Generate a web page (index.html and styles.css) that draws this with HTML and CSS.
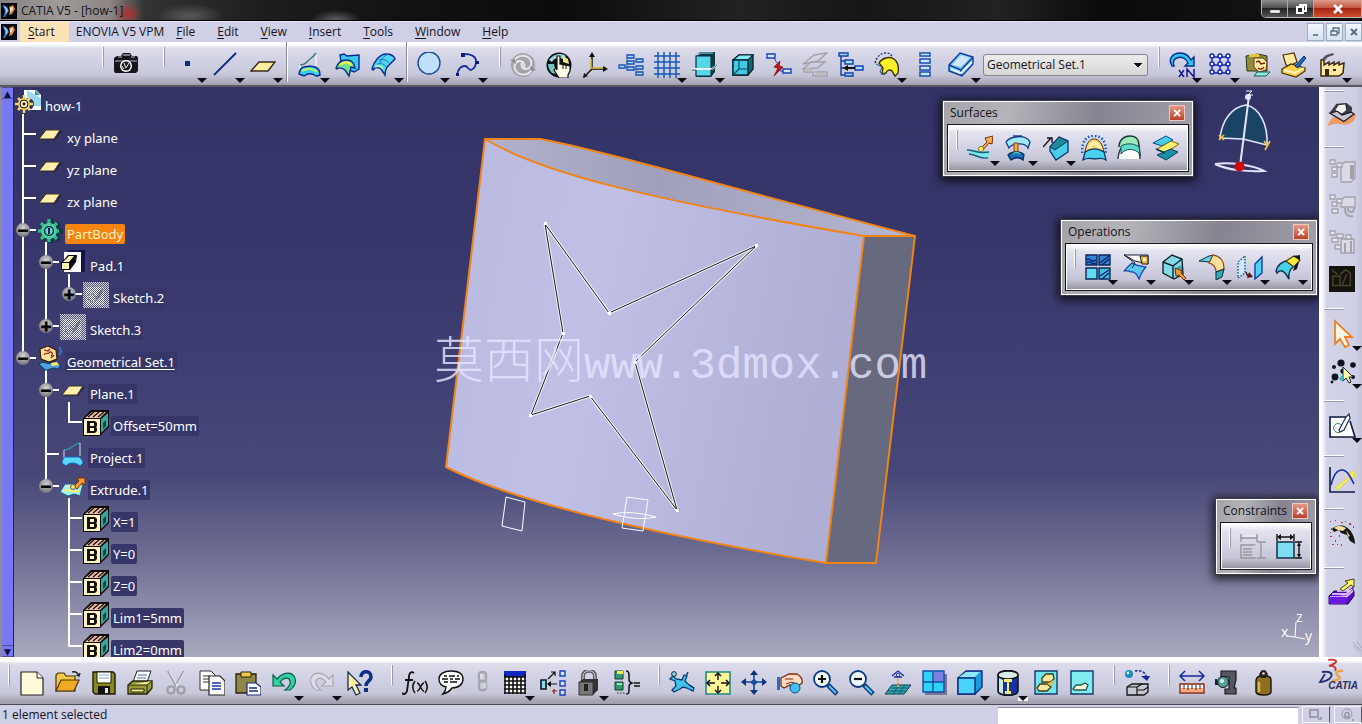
FILE: index.html
```html
<!DOCTYPE html>
<html lang="en">
<head>
<meta charset="utf-8">
<title>CATIA V5 - [how-1]</title>
<link rel="stylesheet" href="styles.css">
</head>
<body>
<svg class="defs" aria-hidden="true">
  <symbol id="app" viewBox="0 0 16 16"><path fill="#05070c" d="M0 0h16v16H0z"/><path fill="#2c6fb5" d="M2 2l4 2 2 4-4 6H2l2-5z"/><path fill="#9fd0f0" d="M2 2l4 3 1 3-3 3 1-4z"/><path fill="#e08a3c" d="M8 4l4-2 2 4-3 5-3 1 1-4z"/><path fill="#fbe3bd" d="M9 5l3-1-1 4-2 1z"/></symbol>
  <symbol id="plane" viewBox="0 0 26 26"><path d="M3 18L9 9h16l-7 9z" fill="#101040" opacity=".55"/><path d="M2 17L9 8h14l-6 9z" fill="#ffeeaa" stroke="#3a3520"/></symbol>
  <symbol id="param" viewBox="0 0 26 26"><path d="M0 8L8 0h18v17l-9 9H0z" fill="#0b0b0b"/><path d="M2 8l7-6h14l-6 6z" fill="#f5b9a8"/><path d="M5 7l6-5m-1 5l6-5m-1 5l6-5" stroke="#151515" stroke-width="1.4"/><path d="M1 9h16v16H1z" fill="#fff3bd"/><path d="M18 9l7-6v13l-7 7z" fill="#37a79d"/><path d="M20 13l3-3v6l-3 3z" fill="#0c4441"/><path d="M4 11h8l2 2v3l-1 1 1 1v3l-2 2H4zm3 2v3h4v-3zm0 5v3h4v-3z" fill="#111" fill-rule="evenodd"/></symbol>
  <pattern id="dither" width="2" height="2" patternUnits="userSpaceOnUse"><path d="M0 0h2v2H0z" fill="#5a5a78"/><path d="M0 0h1v1H0zM1 1h1v1H1z" fill="#fff"/></pattern>
  <symbol id="sketch" viewBox="0 0 26 26"><path d="M0 0h26v26H0z" fill="url(#dither)" opacity=".75"/><path d="M3 5h18v18H3z" fill="url(#dither)"/><path d="M12 18l4-8 3-4 2 1-4 8-4 4z" fill="#4a5a68" opacity=".6"/><circle cx="9" cy="16" r="4" fill="none" stroke="#8a8aa0"/></symbol>
</svg>

<header class="titlebar">
  <svg class="app-icon"><use href="#app"/></svg>
  <h1 class="title">CATIA V5 - [how-1]</h1>
  <div class="win-buttons">
    <button class="win" aria-label="Minimize"><svg viewBox="0 0 14 12"><path d="M2 7h10v3H2z" fill="#fff" stroke="#444" stroke-width=".5"/></svg></button>
    <button class="win" aria-label="Restore"><svg viewBox="0 0 14 12"><path d="M5 2h7v6h-2M3 4h6v6H3z" fill="none" stroke="#fff" stroke-width="2"/></svg></button>
    <button class="win win-close" aria-label="Close"><svg viewBox="0 0 14 12"><path d="M3 2l8 8M11 2l-8 8" stroke="#fff" stroke-width="2.6"/></svg></button>
  </div>
</header>

<nav class="menubar">
  <svg class="app-icon"><use href="#app"/></svg>
  <button class="menu menu-hot"><u>S</u>tart</button>
  <button class="menu menu-vpm">ENOVIA V5 VPM</button>
  <button class="menu"><u>F</u>ile</button>
  <button class="menu"><u>E</u>dit</button>
  <button class="menu"><u>V</u>iew</button>
  <button class="menu"><u>I</u>nsert</button>
  <button class="menu"><u>T</u>ools</button>
  <button class="menu"><u>W</u>indow</button>
  <button class="menu"><u>H</u>elp</button>
  <div class="doc-buttons">
    <button class="doc" aria-label="Minimize document"><svg viewBox="0 0 12 12"><path d="M3 9h5" stroke="#5b6b80" stroke-width="1.6"/></svg></button>
    <button class="doc" aria-label="Restore document"><svg viewBox="0 0 12 12"><path d="M4 5V2h6v5H8M2 5h6v4H2z" fill="none" stroke="#5b6b80" stroke-width="1.3"/></svg></button>
    <button class="doc" aria-label="Close document"><svg viewBox="0 0 12 12"><path d="M3 3l6 6M9 3l-6 6" stroke="#5b6b80" stroke-width="2"/></svg></button>
  </div>
</nav>

<div class="toolbar toolbar-top">
  <div class="group group-first"><i class="grip"></i>
    <button class="tool" aria-label="Capture"><svg viewBox="0 0 26 26"><path d="M1 6l3-2h4l2-3h7l2 3h5l1 2v13l-2 2H2l-1-2z" fill="#16161c"/><path d="M2 9h22M5 5h4m9 0h4" stroke="#b9b9c8"/><path d="M10 3h7" stroke="#ddd"/><circle cx="13" cy="14" r="6" fill="#fff"/><circle cx="13" cy="14" r="4.6" fill="#1b1b20"/><path d="M11 11l2 5 3-5M9 14l2 3" stroke="#eee" fill="none"/></svg></button>
  </div>
  <div class="group"><i class="grip"></i>
    <button class="tool drop" aria-label="Point"><svg viewBox="0 0 26 26"><path d="M11 9h5v5h-5z" fill="#0b2f7a"/></svg></button>
    <button class="tool drop" aria-label="Line"><svg viewBox="0 0 26 26"><path d="M2 23L24 1" stroke="#0d2b78" stroke-width="1.8"/></svg></button>
    <button class="tool drop" aria-label="Plane"><svg viewBox="0 0 26 26"><path d="M1 19L9 10h16l-7 9z" fill="#ffeea0" stroke="#3a2a1a" stroke-width="1.4"/></svg></button>
  </div>
  <i class="rule"></i>
  <div class="group">
    <button class="tool drop" aria-label="Projection"><svg viewBox="0 0 26 26"><path d="M3 13c6 0 7-4 10-6s4-3 6-6" fill="none" stroke="#3c7a80" stroke-width="1.5"/><path d="M3 13v4M19 3v11" stroke="#fff"/><path d="M2 22c1-5 3-7 5-7 4-1 8-1 11 0 3 1 5 4 5 8-2 1-4 1-4 1-4-3-8-3-12 0z" fill="#35d0f0" stroke="#0a2a90" stroke-width="1.4"/><path d="M5 19c5-3 11-3 15 1" stroke="#c6f560" stroke-width="2" fill="none"/></svg></button>
    <button class="tool" aria-label="Intersection"><svg viewBox="0 0 26 26"><path d="M5 3l4-1 3 2 12-1v14l-5 3-12-5z" fill="#3fc9ef" stroke="#0a2a90" stroke-width="1.4"/><path d="M1 16c2-6 6-8 11-8 4 0 7 3 8 8l-4-1-2 9-4-6c-3-2-6-3-8-1z" fill="#6be38c" stroke="#0a2a90" stroke-width="1.4"/><path d="M5 13c4-4 9-3 12 0" stroke="#f6ee50" stroke-width="2.4" fill="none"/></svg></button>
    <button class="tool drop" aria-label="Parallel curve"><svg viewBox="0 0 26 26"><path d="M1 17c2-8 8-15 14-15 5 0 8 2 9 5l-6 6c-3 3-4 6-4 10l-4-6c-3-2-6-2-8 1z" fill="#52d4f2" stroke="#0a2a90" stroke-width="1.4"/><path d="M6 12c4-1 8 0 9 3M8 8c5-1 8 0 10 3M17 2c-4 2-7 5-8 9" stroke="#1577b8" fill="none"/><path d="M4 15c3-2 7-1 8 2" stroke="#a6f0b0" stroke-width="2" fill="none"/></svg></button>
  </div>
  <i class="rule rule-tight"></i>
  <div class="group">
    <button class="tool drop" aria-label="Circle"><svg viewBox="0 0 26 26"><circle cx="12" cy="11" r="11" fill="#bfe0f8" stroke="#1c4a9a" stroke-width="1.4"/></svg></button>
    <button class="tool drop" aria-label="Spline"><svg viewBox="0 0 26 26"><path d="M2 23c1-6 4-9 8-9 3 0 3 4 6 4 3-1 6-5 5-10-1-4-5-6-12-6" fill="none" stroke="#1a2ea0" stroke-width="1.8"/><path d="M6 1h4v4H6zM20 9h4v3h-4zM1 21h3v3H1z" fill="#0a1c80"/></svg></button>
  </div>
  <div class="group group-wide"><i class="grip"></i>
    <button class="tool" aria-label="Update all"><svg viewBox="0 0 26 26"><circle cx="13" cy="13" r="12" fill="#a4a4a8"/><path d="M4 9c3-6 12-7 16-2 3 5 0 10-4 10-5 0-6-6-2-7M22 17c-3 7-12 7-16 2-3-4-1-9 3-10 5 0 7 5 4 8" fill="none" stroke="#e4e4ea" stroke-width="2"/><path d="M0 8l5-1 1 5zM26 18l-5 1-1-5z" fill="#8d8d92"/></svg></button>
    <button class="tool" aria-label="Manual update"><svg viewBox="0 0 26 26"><circle cx="13" cy="13" r="12.5" fill="#0a0f12"/><path d="M3 8c4-6 12-8 17-4l-3 3C12 5 8 6 6 10z" fill="#9adad8"/><path d="M2 12h6l2 10-4-1c-2-2-4-5-4-9z" fill="#75c7c4"/><path d="M17 4l5 3 1 5-6-2z" fill="#f5e789"/><path d="M11 4h3v8l10 2v5l-2 4v3h-9l-5-8 2-2 1 2z" fill="#fffbe8" stroke="#111" stroke-width="1.2"/><path d="M17 13v4m3-4v4" stroke="#111"/></svg></button>
    <button class="tool" aria-label="Axis system"><svg viewBox="0 0 26 26"><path d="M10 3v14h14M10 17l-8 8" fill="none" stroke="#1a1408" stroke-width="1.5"/><path d="M9 7v9h12" fill="none" stroke="#d9b53c" stroke-width="1.4"/><path d="M10 0l3 5H7zM26 17l-5-3v6zM1 26l1-5 4 3z" fill="#111"/></svg></button>
    <button class="tool" aria-label="Historical graph"><svg viewBox="0 0 26 26"><path d="M4 15h7M9 10h8m-2 8h5M9 6v9" stroke="#777"/><g fill="#a9dcf5" stroke="#1b4fb0" stroke-width="1.3"><path d="M9 3h7v3H9zM1 13h6v3H1zM9 9h7v3H9zM18 7h7v3h-7zM9 15h7v3H9zM18 14h7v3h-7zM18 20h7v3h-7z"/></g></svg></button>
    <button class="tool drop" aria-label="Grid"><svg viewBox="0 0 26 26"><path d="M4 0v26M10 0v26M16 0v26M22 0v26M0 4h26M0 10h26M0 16h26M0 22h26" stroke="#1558b8" stroke-width="1.5"/></svg></button>
    <button class="tool drop" aria-label="Work on support"><svg viewBox="0 0 26 26"><path d="M4 4l4-4h15v20l-4 5H4z" fill="#0c3d42"/><path d="M4 4h15v20H4z" fill="#55d8ea" stroke="#0b2d40" stroke-width="1.2"/><path d="M0 17h20l5-4" stroke="#eef" stroke-width="2" fill="none"/><path d="M0 18h4m15 0l6-5" stroke="#28586a" fill="none"/><path d="M5 3l4-2h12" stroke="#9df" fill="none"/></svg></button>
    <button class="tool" aria-label="Create datum"><svg viewBox="0 0 26 26"><path d="M3 8l6-5h14v14l-5 6H3z" fill="#0d6a78" stroke="#07272e" stroke-width="1.4"/><path d="M3 8l6-5h14l-5 5z" fill="#8ae6f2" stroke="#07272e" stroke-width="1.2"/><path d="M3 8h15v15H3z" fill="#41cbe0" stroke="#07272e" stroke-width="1.4"/><path d="M4 22l5-5V9m0 8h9" fill="none" stroke="#0b4d77" stroke-width="1.2"/></svg></button>
    <button class="tool" aria-label="Insert mode"><svg viewBox="0 0 26 26"><g fill="#d2e4fb" stroke="#1b3fb0" stroke-width="1.4"><path d="M1 2h8v4H1zM17 17h8v4h-8z"/></g><path d="M8 6l3 5M14 19h3" stroke="#1b3fb0"/><path d="M14 9l-6 6 4 1-4 8 9-9-4-1z" fill="#c01818" stroke="#7a0b0b" stroke-width=".8"/></svg></button>
    <button class="tool" aria-label="Keep mode"><svg viewBox="0 0 26 26"><g fill="none" stroke="#a3a3a8" stroke-width="1.5"><path d="M1 12L12 3l13-2-9 8zM1 17l8-7h14l-8 6zM2 16v4h9v4h14v-4H13"/></g><path d="M3 18h8M14 22h9" stroke="#bcbcc2" stroke-width="3"/></svg></button>
    <button class="tool" aria-label="Select body"><svg viewBox="0 0 26 26"><path d="M3 1v22h5M3 9h5m-5 7h5" stroke="#123a9a" stroke-width="1.4" fill="none"/><g fill="#a5dcf7" stroke="#143fae" stroke-width="1.4"><path d="M1 1h9v3H1zM7 8h8v4H7zM17 14h8v4h-8zM7 21h8v3H7z"/></g><path d="M5 16l5-3v2h7v2h-7v2z" fill="#111"/></svg></button>
    <button class="tool drop" aria-label="Only current body"><svg viewBox="0 0 26 26"><path d="M1 11C3 4 7 1 12 1s6 3 6 5" fill="none" stroke="#16347e" stroke-dasharray="2 1.5" stroke-width="1.4"/><path d="M5 11C8 6 15 4 20 7c4 3 5 8 4 14l-3 3-3-5c-2-2-5-1-6 2l-4 1 1-6z" fill="#fff02a" stroke="#3a3208" stroke-width="1.4"/><path d="M2 12l6 3-2 5 5 3" stroke="#1d5c90" fill="none"/></svg></button>
    <button class="tool" aria-label="Isolate"><svg viewBox="0 0 26 26"><g fill="#c9e8fa" stroke="#1a4fb5" stroke-width="1.5"><path d="M8 1h10v3H8zM8 7h10v4H8zM8 14h10v4H8zM8 20h10v4H8z"/></g></svg></button>
    <button class="tool drop" aria-label="Catalog"><svg viewBox="0 0 26 26"><path d="M1 13L12 1l13 4v7L14 24 1 19z" fill="#6fcaf0" stroke="#123a9a" stroke-width="1.4"/><path d="M1 13l12 5L25 5M13 18v6" fill="none" stroke="#123a9a" stroke-width="1.4"/><path d="M4 13L13 3l9 3-9 9z" fill="#cfe6fb"/><path d="M3 17l10 4 11-11" stroke="#fff" fill="none" stroke-width="1.6"/></svg></button>
  </div>
  <select class="set-select" aria-label="In work object"><option>Geometrical Set.1</option></select>
  <div class="group group-near"><i class="grip"></i>
    <button class="tool drop" aria-label="Object repetition"><svg viewBox="0 0 26 26"><path d="M3 14C-2 6 5 1 11 1c5 0 9 3 11 7l3-3v9h-9l3-3c-2-5-7-7-11-5-4 1-4 5-3 8z" fill="#34c3ea" stroke="#0a2a90" stroke-width="1.4"/><path d="M10 18l5 7m0-7l-5 7M18 25v-8l7 8v-8" stroke="#16169a" stroke-width="1.5" fill="none"/></svg></button>
    <button class="tool drop" aria-label="Points repetition"><svg viewBox="0 0 26 26"><path d="M5 4v18M13 4v18M21 4v18M5 5h16M5 13h16M5 21h16" stroke="#1226b4" stroke-width="1.4"/><g fill="#fff" stroke="#1226b4" stroke-width="1.5"><circle cx="5" cy="4" r="2"/><circle cx="13" cy="4" r="2"/><circle cx="21" cy="4" r="2"/><circle cx="5" cy="12" r="2"/><circle cx="13" cy="12" r="2"/><circle cx="21" cy="12" r="2"/><circle cx="5" cy="20" r="2"/><circle cx="13" cy="20" r="2"/><circle cx="21" cy="20" r="2"/></g></svg></button>
    <button class="tool" aria-label="Power copy"><svg viewBox="0 0 26 26"><path d="M1 4l12-2 9 2v15H2z" fill="#8f8c3c" stroke="#333115"/><path d="M4 2h10v3H4z" fill="#e8c63c"/><path d="M9 6h9l4 4-1 8-7 2-5-5z" fill="#ffe9a8" stroke="#5a4210"/><path d="M11 10l3-1 2 3 4-1M13 16c2 2 5 1 6-1" stroke="#7a1c10" fill="none" stroke-width="1.4"/><path d="M9 24l3-4h13l-4 4z" fill="#8ef0d8" stroke="#0d5a5a"/></svg></button>
    <button class="tool drop" aria-label="User feature"><svg viewBox="0 0 26 26"><path d="M2 3l11-2 3 9-7 4-4-1z" fill="#ffe9a0" stroke="#4a3008" stroke-width="1.2"/><path d="M1 17l9-5 14 4v3l-9 6-14-4z" fill="#ffd24a" stroke="#4a3008" stroke-width="1.3"/><path d="M3 18l11 3 9-5" fill="none" stroke="#fff6c6" stroke-width="2"/><path d="M14 14l9-10 2 2-8 10z" fill="#1c6fc0" stroke="#0a2a70"/></svg></button>
    <button class="tool drop" aria-label="Template factory"><svg viewBox="0 0 26 26"><path d="M3 7l4-4 7-2 1 2-6 2-3 3z" fill="#55555c"/><path d="M2 8h3v5l5-3v3l5-3v3l5-3v3l5-2-1 10-4 3H2z" fill="#ffe9a0" stroke="#3a2a10" stroke-width="1.5"/><path d="M6 17h4v7H6zM14 17h3v2h-3z" fill="#3a2a10"/></svg></button>
  </div>
</div>

<main class="work">
  <div class="scroll"><button class="scroll-btn" aria-label="Scroll up">▲</button><div class="scroll-track"></div><button class="scroll-btn" aria-label="Scroll down">▼</button></div>
  <section class="viewport">
    <svg class="scene" viewBox="14 87 1305 570" aria-label="Part model">
      <defs>
        <linearGradient id="front" x1="0" x2="1" y1="0" y2=".2"><stop offset="0" stop-color="#bab9de"/><stop offset=".4" stop-color="#c0bfe6"/><stop offset="1" stop-color="#afaed4"/></linearGradient>
        <linearGradient id="topface" x1="0" x2="1"><stop offset="0" stop-color="#b2b2cc"/><stop offset=".4" stop-color="#a09fbc"/><stop offset="1" stop-color="#b6b6d2"/></linearGradient>
      </defs>
      <path d="M485 139H540C600 150 700 180 915 236H864C640 198 540 172 485 139z" fill="url(#topface)"/>
      <path d="M485 139C540 172 640 198 864 236L826 563C640 532 510 500 446 467z" fill="url(#front)"/>
      <path d="M864 236H915L876 563H826z" fill="#67697f"/>
      <path d="M485 139H540C600 150 700 180 915 236L876 563H826C640 532 510 500 446 467zC540 172 640 198 864 236H915M864 236L826 563" fill="none" stroke="#f08418" stroke-width="2"/>
      <g fill="none" stroke="#fff"><path d="M506 497l19 5-3 29-20-5zM627 497l21 3-5 31-21-3zM613 514c12-3 28-1 43 3-14 3-30 1-43-3"/>
      <path d="M545 224L563 333 531 415 590 396 677 510 635 362 756 246 609 313z" stroke-width="3" opacity=".8"/></g>
      <path d="M545 224L563 333 531 415 590 396 677 510 635 362 756 246 609 313z" fill="none" stroke="#181818"/>
      <path d="M544 222h3v3h-3zM562 332h3v3h-3zM529 414h3v3h-3zM589 395h3v3h-3zM676 509h3v3h-3zM634 361h3v3h-3zM755 244h3v3h-3zM608 312h3v3h-3z" fill="#fff"/>
      <text class="watermark" x="434" y="378"><tspan class="wm-cjk">莫西网</tspan><tspan class="wm-latin">www.3dmox.com</tspan></text>
      <path d="M1220 138C1222 120 1232 107 1246 105 1260 108 1268 125 1267 145L1243 139z" fill="#1b4464" stroke="#e4e4ff" stroke-width="1.6"/>
      <path d="M1249 96L1240 166M1215 164c15-2 38 1 49 7-16 1-37-1-49-7" stroke="#e4e4ff" stroke-width="2" fill="none"/>
      <circle cx="1248" cy="97" r="3" fill="#e4e4ff"/><path d="M1246 91h6l-4 4h5" fill="none" stroke="#fff"/>
      <path d="M1219 135l5 5m0-5l-5 5M1264 141l3 4m3-4l-5 9" stroke="#f0c840" stroke-width="1.6"/><circle cx="1239.500" cy="166.500" r="5" fill="#d00808"/>
      <path d="M1296 622l-1 15 10 2M1295 637l-8-1" stroke="#fff" fill="none"/>
      <g class="axis"><text x="1296" y="622">z</text><text x="1281" y="637">x</text><text x="1305" y="641">y</text></g>
    </svg>

    <ul class="tree">
      <li class="root"><div class="row"><svg viewBox="0 0 26 26"><path d="M9 0h12l5 5v15H9z" fill="#fff"/><path d="M12 0v6l5 10h9V8z" fill="#6fc9e8" opacity=".7"/><path d="M20 0l5 5h-5z" fill="#2e9dbd"/><circle cx="13" cy="14" r="6" fill="#27335c"/><circle cx="9" cy="14" r="6" fill="#f3d36e"/><path d="M9 5v18M0 14h18M3 8l12 12M15 8L3 20" stroke="#f3d36e" stroke-width="2.600"/><circle cx="9" cy="14" r="4" fill="#ffeeb0" stroke="#111"/><circle cx="9" cy="14" r="1.400" fill="#111"/></svg><span class="label">how-1</span></div>
        <ul>
          <li><div class="row"><svg><use href="#plane"/></svg><span class="label">xy plane</span></div></li>
          <li><div class="row"><svg><use href="#plane"/></svg><span class="label">yz plane</span></div></li>
          <li><div class="row"><svg><use href="#plane"/></svg><span class="label">zx plane</span></div></li>
          <li><div class="row"><button class="knob" aria-label="Collapse">−</button><svg viewBox="0 0 26 26"><g stroke="#0c3b3f" stroke-width="5"><path d="M14 1v24M2 13h24M5 5l17 17M22 5L5 22"/></g><circle cx="14" cy="13" r="9" fill="#0c3b3f"/><g stroke="#35b58c" stroke-width="3.4"><path d="M12 1v23M1 13h21M4 5l16 16M20 5L4 21"/></g><circle cx="12" cy="13" r="8" fill="#4dcba2"/><circle cx="12" cy="13" r="4.4" fill="#5fd8e6" stroke="#07262c" stroke-width="1.4"/><path d="M12 10v6" stroke="#07262c" stroke-width="2"/></svg><span class="label picked">PartBody</span></div>
            <ul>
              <li><div class="row"><button class="knob" aria-label="Collapse">−</button><svg viewBox="0 0 26 26"><path d="M8 0h17v22H8z" fill="#14144c"/><path d="M4 2h17v20H4z" fill="#fff"/><path d="M1 13l7-8h9l-1 7-6 8H1z" fill="#0b0b0b"/><path d="M3 12l6-6h5l-5 6z" fill="#fff6b8"/><path d="M2 13h7v6H2z" fill="#fff3b0"/></svg><span class="label">Pad.1</span></div>
                <ul><li><div class="row"><button class="knob" aria-label="Expand">+</button><svg><use href="#sketch"/></svg><span class="label">Sketch.2</span></div></li></ul>
              </li>
              <li><div class="row"><button class="knob" aria-label="Expand">+</button><svg><use href="#sketch"/></svg><span class="label">Sketch.3</span></div></li>
            </ul>
          </li>
          <li><div class="row"><button class="knob" aria-label="Collapse">−</button><svg viewBox="0 0 26 26"><path d="M3 3l8-3 8 4 1 9-8 3-8-3z" fill="#ffdf9a" stroke="#3a1c08" stroke-width="1.2"/><path d="M7 4l4 1 2-2M7 9c1-3 4-1 5-2m2 5c1-2 2-1 3-3M12 7c2-3 5 1 2 3" stroke="#8a1c10" fill="none" stroke-width="1.2"/><path d="M22 1c3 3 2 6 0 8" stroke="#2a7ad0" stroke-width="2" fill="none"/><path d="M2 18c5-4 8 1 12-1 4-2 7 0 10 3l-4 3c-5-3-8 2-12 1z" fill="#4fa0e0" stroke="#0a3a5a"/><path d="M14 17l6-1 2 3-7 1z" fill="#f5ee60"/></svg><span class="label inwork">Geometrical Set.1</span></div>
            <ul>
              <li><div class="row"><button class="knob" aria-label="Collapse">−</button><svg><use href="#plane"/></svg><span class="label">Plane.1</span></div>
                <ul><li><div class="row"><svg><use href="#param"/></svg><span class="label">Offset=50mm</span></div></li></ul>
              </li>
              <li><div class="row"><svg viewBox="0 0 26 26"><path d="M4 8c7 0 9-6 16-7" fill="none" stroke="#2f8fb0" stroke-width="1.4"/><path d="M4 8v8M20 1v13" stroke="#cfe0ff"/><path d="M2 21c1-5 2-6 4-6h12c2 0 4 2 5 6l-3 3c-4-4-11-4-14 0z" fill="#5ad8f5" stroke="#1b66c8"/></svg><span class="label">Project.1</span></div></li>
              <li><div class="row"><button class="knob" aria-label="Collapse">−</button><svg viewBox="0 0 26 26"><path d="M0 18l5-8h18l-3 12-6-2-6 2z" fill="#a4eef0" stroke="#1c5c90"/><path d="M3 17c6-3 10 2 16 0M7 12c5-1 9 2 14 0" stroke="#fff36a" stroke-width="1.8" fill="none"/><path d="M14 12l5-5-2-3h8v7l-3-2-5 6z" fill="#f49a30" stroke="#7a2c08"/><circle cx="13" cy="13" r="2.4" fill="#fff36a" stroke="#555"/></svg><span class="label">Extrude.1</span></div>
                <ul>
                  <li><div class="row"><svg><use href="#param"/></svg><span class="label">X=1</span></div></li>
                  <li><div class="row"><svg><use href="#param"/></svg><span class="label">Y=0</span></div></li>
                  <li><div class="row"><svg><use href="#param"/></svg><span class="label">Z=0</span></div></li>
                  <li><div class="row"><svg><use href="#param"/></svg><span class="label">Lim1=5mm</span></div></li>
                  <li><div class="row"><svg><use href="#param"/></svg><span class="label">Lim2=0mm</span></div></li>
                </ul>
              </li>
            </ul>
          </li>
        </ul>
      </li>
    </ul>

    <section class="panel panel-surfaces">
      <header class="panel-head"><h2>Surfaces</h2><button class="panel-close" aria-label="Close Surfaces">×</button></header>
      <div class="panel-body"><i class="grip"></i>
        <button class="tool drop" aria-label="Extrude"><svg viewBox="0 0 26 26"><path d="M1 15h7l5 2 8-1 3 3-4 4-9-1-8-4z" fill="#7fe6ea"/><path d="M0 15c8 0 10 4 22 2M2 19c8 1 11 5 19 4" stroke="#135f78" stroke-width="1.4" fill="none"/><path d="M14 13l6-6-2-4 8-2-1 8-3-1-6 7z" fill="#f5b050" stroke="#7b2d0a"/><circle cx="14" cy="14" r="2.600" fill="#ffe94c" stroke="#776"/></svg></button>
        <button class="tool drop" aria-label="Offset"><svg viewBox="0 0 26 26"><path d="M1 7c4-6 20-8 24 0l-2 6c-2-5-15-6-19 0z" fill="#9fe8f6" stroke="#123a8a" stroke-width="1.3"/><path d="M8 1h9" stroke="#123a8a" stroke-width="1.4"/><path d="M9 8h4v9H9z" fill="#f7a840" stroke="#8a4410"/><path d="M3 20c4-4 13-4 16 0l-1 5c-3-3-8-3-12 0z" fill="#1b72b8" stroke="#0a2a5a" stroke-width="1.3"/><path d="M8 19c2-2 5-2 7 0" stroke="#4fd0a0" stroke-width="1.6" fill="none"/></svg></button>
        <button class="tool drop" aria-label="Sweep"><svg viewBox="0 0 26 26"><path d="M7 12l9-10 9 4v11l-12 8-6-9z" fill="#49cde8" stroke="#0b3566" stroke-width="1.3"/><path d="M7 12l9-10 9 4-13 9z" fill="#1d8a98" stroke="#0b3566"/><path d="M0 12l8-9m-4 0h5v5" stroke="#15151c" stroke-width="1.4" fill="none"/></svg></button>
        <button class="tool" aria-label="Fill"><svg viewBox="0 0 26 26"><path d="M1 18C1 5 6 1 13 1s12 4 12 17" fill="none" stroke="#1757b8" stroke-width="2.6" stroke-dasharray="1.5 2"/><path d="M4 18C5 8 9 4 13 4s9 4 10 14c-6-4-13-4-19 0z" fill="#ffd77a" stroke="#3b2a10"/><path d="M8 13c3-6 8-6 11 0" stroke="#fff4a0" stroke-width="3" fill="none"/><path d="M2 25l2-8c6-4 13-4 19 0l2 8c-5-3-8-1-11-1s-7-2-12 1z" fill="#4ad0ef" stroke="#0b3566" stroke-width="1.3"/></svg></button>
        <button class="tool" aria-label="Multi-sections surface"><svg viewBox="0 0 26 26"><path d="M2 12C2 5 7 1 13 1s9 4 9 9l1 11" fill="#9fe8b8" stroke="#173a3a" stroke-width="1.5"/><path d="M1 24c1-10 3-13 11-13s11 5 11 13" fill="#fff" stroke="#27304a" stroke-width="1.4"/><path d="M4 11c5-3 13-3 18 1l1 7c-5-6-15-6-19 0z" fill="#5fdcc8" stroke="#145060"/></svg></button>
        <button class="tool" aria-label="Blend"><svg viewBox="0 0 26 26"><path d="M0 8l13-7 7 4-11 6z" fill="#45cdf0" stroke="#0c4a88"/><path d="M4 14l14-8 8 3-14 9z" fill="#fff36a" stroke="#7b6a10"/><path d="M4 20l14-6 7 3-12 8z" fill="#1790a8" stroke="#0c3a58"/><path d="M3 14l9 4" stroke="#0c3a58" stroke-width="1.400"/></svg></button>
      </div>
    </section>

    <section class="panel panel-operations">
      <header class="panel-head"><h2>Operations</h2><button class="panel-close" aria-label="Close Operations">×</button></header>
      <div class="panel-body"><i class="grip"></i>
        <button class="tool drop" aria-label="Join"><svg viewBox="0 0 26 26"><g fill="#2f86d8" stroke="#0d2458" stroke-width="1.4"><path d="M1 1h11v10H1zM14 1h11v10H14z"/><path d="M1 14h11v11H1z" fill="#5fdcf0"/><path d="M14 14h11v11H14z" fill="#40c0e4"/></g><path d="M2 6c2-4 4 4 9 0M2 9c3-4 5 3 9 0M15 9l9-7M17 11l7-6M15 22l9-6M17 25l7-6" stroke="#0a1f60" fill="none" stroke-width="1.3"/></svg></button>
        <button class="tool drop" aria-label="Split"><svg viewBox="0 0 26 26"><path d="M1 1h24v9l-13-3z" fill="#fff" stroke="#141c30"/><path d="M17 2h8v8h-6z" fill="#f5b93c" stroke="#141c30"/><path d="M20 4h3v3h-3z" fill="#fff"/><path d="M1 17c4-5 6-6 8-8 4 3 10 3 14 4-4 4-5 7-7 12-2-5-4-8-8-7-2-2-5-1-7-1z" fill="#57c9ef" stroke="#1a3fb0" stroke-width="1.2"/><path d="M1 1l11 8-3 5" fill="none" stroke="#141c30"/></svg></button>
        <button class="tool drop" aria-label="Extract"><svg viewBox="0 0 26 26"><path d="M2 8l9-7 10 4 1 15-9 5-11-6z" fill="#86d9e8" stroke="#12222e" stroke-width="1.4"/><path d="M2 8l10 4 9-7M12 12v13" fill="none" stroke="#12222e" stroke-width="1.4"/><path d="M14 14l7-3v7l-6 3z" fill="#31a5b5"/><path d="M14 14l7 3-1 2 5 5-2 2-5-5-3 1z" fill="#f59a2e" stroke="#7b320a"/></svg></button>
        <button class="tool drop" aria-label="Fillet"><svg viewBox="0 0 26 26"><path d="M0 7l10-5 5-1-4 7z" fill="#5ed6e8" stroke="#0c2a40"/><path d="M14 1c7 1 11 6 11 14l-8 3c0-5-3-8-7-9z" fill="#ffdf9a" stroke="#8a4a18" stroke-width="1.2"/><path d="M25 15l-2 8-6 3V18z" fill="#35a9b5" stroke="#0c2a40"/></svg></button>
        <button class="tool drop" aria-label="Symmetry"><svg viewBox="0 0 26 26"><path d="M8 2v17l-7 5V8z" fill="#cfe6f5" stroke="#1e5ca8" stroke-width="1.5" stroke-dasharray="1.5 1.5"/><path d="M18 10l7-7v16l-7 6z" fill="#4fd2ee" stroke="#0e3ea0" stroke-width="1.4"/><path d="M9 18c1 4 3 5 6 4" stroke="#30141c" stroke-width="1.4" fill="none"/><path d="M12 18l4 5-6 1z" fill="#5a1414"/></svg></button>
        <button class="tool drop" aria-label="Extrapolate"><svg viewBox="0 0 26 26"><path d="M1 17c2-7 6-9 10-10l8 5c-4 3-6 7-5 13l-4-6c-3-3-6-3-8 0z" fill="#49d2e6" stroke="#0b2d50" stroke-width="1.4"/><path d="M11 7l8-5 6 4-6 7z" fill="#ffe83a" stroke="#4b400a" stroke-width="1.2"/><path d="M18 2l7-1v5zM20 11l4-3-2 7-4 2z" fill="#101820"/></svg></button>
      </div>
    </section>

    <section class="panel panel-constraints">
      <header class="panel-head"><h2>Constraints</h2><button class="panel-close" aria-label="Close Constraints">×</button></header>
      <div class="panel-body"><i class="grip"></i>
        <button class="tool" aria-label="Constraint defined in dialog"><svg viewBox="0 0 26 26"><g stroke="#98989e" fill="none" stroke-width="1.4"><path d="M1 1v8M17 1v8M1 5h16M21 9v16M17 9h9M1 12h14v13H1zM3 16h9M3 19h9M3 22h9M17 25h9"/></g><path d="M3 3h13M15 12v12" stroke="#f4f4f8"/></svg></button>
        <button class="tool" aria-label="Constraint"><svg viewBox="0 0 26 26"><path d="M1 9h17v16H1z" fill="#7fdcf2" stroke="#123040" stroke-width="1.5"/><path d="M1 1v7M18 1v7M3 4h13M23 11v12M19 9h7M19 25h7" stroke="#111" stroke-width="1.4"/><path d="M1 4l4-3v6zM18 4l-4-3v6zM23 9l-2 4h4zM23 25l-2-4h4z" fill="#111"/></svg></button>
      </div>
    </section>
  </section>

  <aside class="sidebar">
    <div class="vgroup"><i class="vgrip"></i>
      <button class="tool" aria-label="Workbench"><svg viewBox="0 0 28 28"><path d="M-1 26c1-7 6-12 14-12l16-1c0 8-8 13-15 11-5-1-9-1-15 2z" fill="#ee9a62"/><path d="M1 11l7-9 11-1 6 5-1 8-9 5z" fill="#3c3c46"/><path d="M6 9l4-6 8-1 1 7-5 4z" fill="#f4f4f8" stroke="#222"/><path d="M1 12l8-2 5 4 10-3 3 2-11 8z" fill="#c7c7d4" stroke="#1a1a20" stroke-width="1.300"/></svg></button></div>
    <div class="vgroup vgroup-a"><i class="vgrip"></i>
      <button class="tool" aria-label="Paste part"><svg viewBox="0 0 26 26"><path d="M12 7l4-3h10v16l-4 4H12z" fill="#dadae6" stroke="#a2a2ac" stroke-width="1.300"/><g fill="#e6e6f0" stroke="#a2a2ac" stroke-width="1.3"><path d="M1 2h5v4H1zM3 9h5v4H3zM3 15h5v4H3zM8 5h5v4H8z"/></g><path d="M23 7v14" stroke="#a2a2ac" stroke-width="4"/></svg></button>
      <button class="tool" aria-label="Paste link"><svg viewBox="0 0 26 26"><path d="M12 6l4-3h10v10H12z" fill="#dadae6" stroke="#a2a2ac" stroke-width="1.300"/><g fill="#e6e6f0" stroke="#a2a2ac" stroke-width="1.3"><path d="M1 1h5v4H1zM3 8h5v4H3zM3 15h6v4H3zM8 5h5v4H8z"/></g><path d="M16 14c0 7 3 9 8 8M19 14c-1 5 6 6 6 0" stroke="#a2a2ac" stroke-width="2" fill="none"/></svg></button>
      <button class="tool" aria-label="Paste body"><svg viewBox="0 0 26 26"><path d="M12 9h13v14H12z" fill="#dadae6" stroke="#a2a2ac" stroke-width="1.300"/><g fill="#e6e6f0" stroke="#a2a2ac" stroke-width="1.3"><path d="M1 1h5v4H1zM3 8h6v4H3zM8 4h6v4H8zM6 15h6v4H6zM17 5h5v4h-5z"/></g><path d="M16 13v9M22 11v12" stroke="#a2a2ac" stroke-width="2"/></svg></button>
      <button class="tool" aria-label="Apply material"><svg viewBox="0 0 28 28"><path d="M0 0h28v28H0z" fill="#15130e"/><path d="M3 4l6 5M4 11h8v10H4zM12 9l6-5 5 4v13h-9l5-12" fill="none" stroke="#48432e" stroke-width="1.600"/></svg></button></div>
    <div class="vgroup vgroup-b"><i class="vgrip"></i>
      <button class="tool drop" aria-label="Select"><svg viewBox="0 0 26 26"><path d="M6 0v23l5-5 5 8 4-2-4-8h7z" fill="#fff5e8" stroke="#f07f26" stroke-width="1.800"/></svg></button>
      <button class="tool drop" aria-label="Selection sets"><svg viewBox="0 0 26 26"><g fill="#0e1420"><circle cx="12" cy="4" r="3.6"/><circle cx="5" cy="8" r="2"/><circle cx="24" cy="6" r="2.8"/><circle cx="6" cy="18" r="3.4"/><circle cx="14" cy="12" r="2.6"/><circle cx="24" cy="18" r="2"/><circle cx="3" cy="23" r="1.4"/></g><path d="M14 8v14l3-3 3 5 2-1-2-5h4z" fill="#fff6a8" stroke="#142a3a"/><path d="M10 20l4-5v8z" fill="#35b8c0"/></svg></button></div>
    <div class="vgroup vgroup-c"><i class="vgrip"></i>
      <button class="tool drop" aria-label="Sketcher"><svg viewBox="0 0 26 26"><path d="M1 4h19l5 20H1z" fill="#fff"/><path d="M18 4H1v20h25L21 8" fill="none" stroke="#101a40" stroke-width="1.600"/><circle cx="9" cy="15" r="4.500" fill="none" stroke="#3a8a50"/><path d="M10 17l7-13 3-3 1 4-6 12-4 2z" fill="#fff" stroke="#17305a" stroke-width="1.200"/></svg></button></div>
    <div class="vgroup vgroup-d"><i class="vgrip"></i>
      <button class="tool" aria-label="Curvature analysis"><svg viewBox="0 0 26 26"><path d="M1 0v25h25" fill="none" stroke="#101a40" stroke-width="1.600"/><path d="M6 21L21 9l-3-2 8-3-1 7-3-1L9 23z" fill="#f5f06a" stroke="#e0d840"/><path d="M2 18C5 7 8 3 13 3s8 6 12 14" fill="none" stroke="#1a2ab0" stroke-width="1.600"/></svg></button></div>
    <div class="vgroup vgroup-e"><i class="vgrip"></i>
      <button class="tool" aria-label="Apply texture"><svg viewBox="0 0 26 26"><g fill="#c03828"><path d="M1 1h1v1H1zM6 0h1v1H6zM12 2h2v1h-2zM2 8h1v2H2zM1 16h2v1H1zM6 20h1v2H6zM10 15h1v2h-1zM3 24h2v1H3zM12 24h1v2h-1zM20 3h2v2h-2zM16 1h1v1h-1zM24 6h1v2h-1zM8 24h1v1H8zM1 12h1v1H1z"/></g><path d="M3 9c3-3 9-5 14-2 5 3 9 9 9 17l-5-3-3-6-6-2-2-3-5 2z" fill="#151515"/><path d="M5 8c4-3 8-2 12 0l-3 3-5-1z" fill="#f5e0a0"/><path d="M17 10l4 6-2 1z" fill="#e8c880"/></svg></button></div>
    <div class="vgroup vgroup-f"><i class="vgrip"></i>
      <button class="tool" aria-label="Sweep solid"><svg viewBox="0 0 26 26"><path d="M0 17l5-5h20v5l-6 8H0z" fill="#5a10c8" stroke="#25064f"/><path d="M3 14h14l7-6v4l-7 6" fill="#a860e8" stroke="#40108a"/><path d="M3 15h14l6-5M1 18h16l7-6M8 12h12" stroke="#f0d8ff" fill="none" stroke-width="1.300"/><path d="M0 18h17v7H2q-2 0-2-2z" fill="#6a1ae0"/><path d="M11 10l8-6-3-2 9-2v8l-3-2-8 6z" fill="#fff36a" stroke="#4a4210"/></svg></button></div>
    <svg class="corner-grip" viewBox="0 0 10 12"><path d="M1 1l8 9M1 4l6 7M4 0l6 7" stroke="#a8a8b8"/></svg>
  </aside>
</main>

<div class="toolbar toolbar-bottom">
  <div class="group"><i class="grip"></i>
    <button class="tool" aria-label="New"><svg viewBox="0 0 26 26"><path d="M2 2h16l6 6v17H2z" fill="#fffbd8" stroke="#222" stroke-width="1.2"/><path d="M18 2v6h6" fill="#fff" stroke="#222"/></svg></button>
    <button class="tool" aria-label="Open"><svg viewBox="0 0 26 26"><path d="M1 21V5l2-2h6l2 3h9v15z" fill="#f7c948" stroke="#4a3208" stroke-width="1.2"/><path d="M1 21l5-11h18l-5 11z" fill="#f0a924" stroke="#4a3208" stroke-width="1.2"/><path d="M17 2c4-1 6 1 7 4l1-3m-1 3l-3-1" stroke="#222" fill="none" stroke-width="1.3"/></svg></button>
    <button class="tool" aria-label="Save"><svg viewBox="0 0 26 26"><path d="M2 2h20l2 2v20H4l-2-2z" fill="#8a8a1c" stroke="#1a1a08" stroke-width="1.4"/><path d="M6 2h14v11H6z" fill="#fff" stroke="#1a1a08"/><path d="M8 5h10M8 8h10" stroke="#7aa8d0"/><path d="M7 16h12v8H7z" fill="#111"/><path d="M14 18h3v5h-3z" fill="#e8e8e8"/></svg></button>
    <button class="tool" aria-label="Print"><svg viewBox="0 0 26 26"><path d="M6 12L10 1h14l-4 11z" fill="#fff" stroke="#222"/><path d="M11 5h9M10 8h9" stroke="#3c6cb0"/><path d="M1 15l5-4h19v7l-5 6H1z" fill="#9a9a38" stroke="#222210" stroke-width="1.3"/><path d="M1 15h19l5-4M20 15v9M4 19h13v3H4z" fill="#efe98a" stroke="#222210"/></svg></button>
    <button class="tool" aria-label="Cut"><svg viewBox="0 0 26 26"><path d="M5 1l9 16M21 1l-9 16" stroke="#a0a0a8" stroke-width="2.400"/><path d="M6 1l9 16M22 1l-9 16" stroke="#f0f0f6"/><circle cx="8" cy="20" r="3.6" fill="none" stroke="#a0a0a8" stroke-width="2.400"/><circle cx="18" cy="20" r="3.600" fill="none" stroke="#a0a0a8" stroke-width="2.400"/></svg></button>
    <button class="tool" aria-label="Copy"><svg viewBox="0 0 26 26"><path d="M1 1h11l4 4v15H1z" fill="#fff" stroke="#333"/><path d="M4 6h7M4 9h7M4 12h7" stroke="#333"/><path d="M10 6h11l5 5v14H10z" fill="#fff" stroke="#222" stroke-width="1.2"/><path d="M13 13h9M13 16h9M13 19h9" stroke="#1a3aa0" stroke-width="1.4"/></svg></button>
    <button class="tool" aria-label="Paste"><svg viewBox="0 0 26 26"><path d="M1 4h20v19H1z" fill="#8f8746" stroke="#26220c" stroke-width="1.3"/><path d="M6 2h10v5H6z" fill="#f0c84c" stroke="#26220c"/><path d="M12 13h9l5 4v8H12z" fill="#fff" stroke="#1a2a80" stroke-width="1.2"/><path d="M14 18h8M14 21h9" stroke="#1a2a80" stroke-width="1.4"/></svg></button>
    <button class="tool drop" aria-label="Undo"><svg viewBox="0 0 26 26"><path d="M2 5v11h11l-4-4c4-5 9-5 10-1 1 3-1 6-5 9h5c5-4 7-9 4-14C19 1 11 3 6 9z" fill="#34d0a0" stroke="#0d5c48" stroke-width="1.2"/></svg></button>
    <button class="tool drop" aria-label="Redo"><svg viewBox="0 0 26 26"><path d="M24 5v11H13l4-4c-4-5-9-5-10-1-1 3 1 6 5 9H7C2 16 0 11 3 6 7 1 15 3 20 9z" fill="#ddddea" stroke="#a8a8b2" stroke-width="1.2"/></svg></button>
    <button class="tool" aria-label="What's this"><svg viewBox="0 0 26 26"><path d="M1 2v18l4-3 4 8 4-2-4-8h5z" fill="#fff3a0" stroke="#142a60" stroke-width="1.3"/><path d="M14 7c0-7 10-7 10 0 0 4-5 4-5 9" fill="none" stroke="#0d2f8a" stroke-width="3.6"/><path d="M17 18h4v4h-4z" fill="#0d2f8a"/></svg></button>
  </div>
  <div class="group group-k"><i class="grip"></i>
    <button class="tool" aria-label="Formula"><svg viewBox="0 0 26 26"><g fill="none" stroke="#111"><path d="M12 3c-3-2-5 0-5 4L5 21c-1 3-3 4-5 2M3 10h8" stroke-width="1.8"/><path d="M13 11c-3 4-3 8 0 12M23 11c3 4 3 8 0 12M15 13c3 0 4 8 7 8m0-8c-3 0-4 8-7 8" stroke-width="1.5"/></g></svg></button>
    <button class="tool" aria-label="Comment"><svg viewBox="0 0 26 26"><path d="M13 1c8 0 12 3 12 8s-4 9-11 9c-2 3-5 5-9 6 2-2 3-4 3-7-4-1-7-4-7-8 0-5 5-8 12-8z" fill="#fff" stroke="#111" stroke-width="1.4"/><path d="M6 6h3m2 0h6m2 0h2M4 9h6m2 0h3m2 0h5M6 12h4m2 0h7" stroke="#111" stroke-width="1.5"/></svg></button>
    <button class="tool tool-narrow" aria-label="Link"><svg viewBox="0 0 26 26"><g fill="none" stroke="#a6a6ae" stroke-width="2.4"><path d="M9 5c0-4 7-4 7 0v4c0 3-7 3-7 0zM9 14c0-4 7-4 7 0v4c0 3-7 3-7 0z"/></g><path d="M11 4v5M15 13v5" stroke="#f4f4f8"/></svg></button>
    <button class="tool drop" aria-label="Design table"><svg viewBox="0 0 26 26"><path d="M2 1h22v6H2z" fill="#1226c0"/><path d="M2 7h22v16H2z" fill="#fff"/><path d="M3 4v20M7 6v18M11 6v18M15 6v18M19 6v18M23 4v20M2 7h22M2 11h22M2 15h22M2 19h22M2 23h22" stroke="#111" stroke-width="1.6"/></svg></button>
    <button class="tool" aria-label="Relations"><svg viewBox="0 0 26 26"><path d="M1 10h5v9H1z" fill="#7fdcf2" stroke="#111" stroke-width="1.6"/><path d="M8 14h9M8 9l7-7m-4 0h4v4" stroke="#111" stroke-width="1.2" fill="none"/><path d="M14 19v5m-2-3h5" stroke="#8a1c20" stroke-width="1.200"/><path d="M7 14l4-3v6z"/><g fill="#d5e4fa" stroke="#1b3fc0" stroke-width="1.4"><path d="M20 1h5v5h-5zM20 11h5v5h-5zM20 20h5v5h-5z"/></g></svg></button>
    <button class="tool drop" aria-label="Lock"><svg viewBox="0 0 26 26"><path d="M7 12V6c0-7 12-7 12 0v7" fill="none" stroke="#5c5c5c" stroke-width="4"/><path d="M7 12V6c0-7 12-7 12 0v6" fill="none" stroke="#d8d8d8"/><path d="M3 12l4-3h15v11l-5 5H3z" fill="#333"/><path d="M3 12h14v13H3z" fill="#77777a" stroke="#333"/><path d="M8 14h4v7H8z" fill="#222"/></svg></button>
    <button class="tool" aria-label="Equivalent dimensions"><svg viewBox="0 0 26 26"><path d="M1 1h8v8H1zM1 12h8v8H1z" fill="#2f9a70" stroke="#143a30"/><path d="M3 1h6v3H3z" fill="#f5ec50"/><path d="M3 13h5v2H3z" fill="#9fe0c0"/><path d="M3 23h9" stroke="#222" stroke-dasharray="1.500 1.500"/><path d="M12 1c3 0 3 2 3 6s0 5 3 6c-3 1-3 2-3 6s0 5-3 5M20 13h6M20 16h6" fill="none" stroke="#111" stroke-width="1.500"/></svg></button>
  </div>
  <div class="group group-k"><i class="grip"></i>
    <button class="tool" aria-label="Fly mode"><svg viewBox="0 0 26 26"><path d="M4 6l3 3 6 1 2-5 3 1-2 5 3 3 6 4-1 3-6-3-4-1-3 2-6 3-2-2 4-4-1-5-5-2z" fill="#3fc5ea" stroke="#0e3a70" stroke-width="1.3"/><circle cx="5" cy="4" r="2.400" fill="#7fdcf2" stroke="#222"/><path d="M17 6l2-4M20 15l5 3" stroke="#0e3a70" stroke-width="1.400"/></svg></button>
    <button class="tool" aria-label="Fit all in"><svg viewBox="0 0 26 26"><path d="M1 2h24v22H1z" fill="#fff79a" stroke="#1c8a80" stroke-width="1.6"/><path d="M13 4v6M13 16v6M3 13h7M16 13h7" stroke="#111" stroke-width="1.400"/><path d="M10 6l3-3 3 3M10 20l3 3 3-3M5 10l-3 3 3 3M21 10l3 3-3 3" stroke="#111" stroke-width="1.500" fill="none"/></svg></button>
    <button class="tool" aria-label="Pan"><svg viewBox="0 0 26 26"><path d="M13 4v17M4 12h18" stroke="#16489a" stroke-width="1.6"/><path d="M13 0l-4 5h8zM13 25l-4-5h8zM0 12l5-4v8zM26 12l-5-4v8z" fill="#0d3478"/><path d="M13 9l4 3-4 4-4-4z" fill="#1a4fa0"/></svg></button>
    <button class="tool" aria-label="Rotate"><svg viewBox="0 0 26 26"><path d="M0 7h3v13H0z" fill="#1f6fd0"/><path d="M4 8l8-4h8c4 2 6 6 5 9l-4 3-8-1-6 3-3-2z" fill="#ffd9c0" stroke="#7a2c18" stroke-width="1.3"/><path d="M8 9h8M9 14l6-2 6 3" stroke="#7a2c18" fill="none"/><circle cx="18" cy="18" r="5" fill="#45bdf0" stroke="#0f4a8a"/></svg></button>
    <button class="tool" aria-label="Zoom in"><svg viewBox="0 0 26 26"><path d="M15 15l9 9" stroke="#0c3a80" stroke-width="5"/><path d="M16 16l7 7" stroke="#5fc8f0" stroke-width="2"/><circle cx="9" cy="9" r="8" fill="#f4faff" stroke="#0c3a80" stroke-width="1.800"/><path d="M9 5v8M5 9h8" stroke="#111" stroke-width="2.200"/></svg></button>
    <button class="tool" aria-label="Zoom out"><svg viewBox="0 0 26 26"><path d="M15 15l9 9" stroke="#0c3a80" stroke-width="5"/><path d="M16 16l7 7" stroke="#5fc8f0" stroke-width="2"/><circle cx="9" cy="9" r="8" fill="#f4faff" stroke="#0c3a80" stroke-width="1.800"/><path d="M5 9h8" stroke="#111" stroke-width="2.200"/></svg></button>
    <button class="tool" aria-label="Normal view"><svg viewBox="0 0 26 26"><path d="M0 24l7-9h19l-7 9z" fill="#3aa6b0" stroke="#0d3a48"/><path d="M3 21h19M6 18h18M8 24l6-9M14 24l6-9" stroke="#0d5a68"/><path d="M13 6v12" stroke="#f0a830" stroke-width="1.800" stroke-dasharray="2 1"/><path d="M7 6l6-5 6 5M9 7h8" fill="none" stroke="#1a2aa0" stroke-width="1.300"/><circle cx="13" cy="5" r="1.600" fill="#fff" stroke="#1a2aa0"/></svg></button>
    <button class="tool" aria-label="Multi-view"><svg viewBox="0 0 26 26"><path d="M4 4h22v21H4z" fill="#777790"/><path d="M2 1h21v21H2z" fill="#2fd4f4" stroke="#1a48a8" stroke-width="1.400"/><path d="M12 2v20M2 12h21" stroke="#1a48a8" stroke-width="1.400"/><path d="M13 2h9v9h-9z" fill="#7a80e0"/></svg></button>
    <button class="tool drop" aria-label="Isometric view"><svg viewBox="0 0 26 26"><path d="M1 8l8-7h16v16l-7 7H1z" fill="#1c9ae0" stroke="#102a80" stroke-width="1.400"/><path d="M1 8h17v16H1z" fill="#4ad4f8" stroke="#102a80" stroke-width="1.400"/><path d="M2 7l7-5h14l-5 5z" fill="#8fe6fb"/></svg></button>
    <button class="tool drop lit" aria-label="Shading with edges"><svg viewBox="0 0 26 26"><path d="M3 5c0-6 20-6 20 0v16c0 6-20 6-20 0z" fill="#1830a0" stroke="#111" stroke-width="1.500"/><ellipse cx="13" cy="5" rx="10" ry="4" fill="#d8ece8" stroke="#111" stroke-width="1.300"/><path d="M4 8v14l4 2V10z" fill="#c8e8e0"/><path d="M9 9h8v3h-3v9h2v3h-6v-3h2v-9H9z" fill="#f4ec70"/></svg></button>
    <button class="tool" aria-label="Hide/Show"><svg viewBox="0 0 26 26"><path d="M2 1h22v23H2z" fill="#6fe6ee" stroke="#123a6a" stroke-width="1.400"/><path d="M9 8l4-4h7l1 5-4 3H9zM4 18l3-4h7l4 3-4 4H6z" fill="#f4e8a0" stroke="#4a3a10" stroke-width="1.300"/><path d="M14 14l6-4 1 2-3 4z" fill="#e8b848"/></svg></button>
    <button class="tool" aria-label="Swap visible space"><svg viewBox="0 0 26 26"><path d="M2 1h22v23H2z" fill="#7fecf2" stroke="#123a6a" stroke-width="1.400"/><path d="M4 19l3-4h5l4-2 3 2-2 5H6z" fill="#f4f6dc" stroke="#2a5a50" stroke-width="1.300"/></svg></button>
  </div>
  <div class="group group-k"><i class="grip"></i>
    <button class="tool" aria-label="Geometrical transfer"><svg viewBox="0 0 26 26"><circle cx="5" cy="4" r="4" fill="#1c8ab0"/><circle cx="4" cy="3" r="1.400" fill="#bff"/><path d="M11 1c6-1 10 1 11 5" stroke="#1a2aa0" stroke-width="1.600" stroke-dasharray="2.500 1.500" fill="none"/><path d="M17 6h9l-3 5z" fill="#1a2aa0"/><path d="M3 17l5-3h16v8l-4 3H3z" fill="#c8c8d4" stroke="#111" stroke-width="1.300"/><path d="M3 17h10v8M13 17l5-3M13 20h7l4-3" stroke="#111" fill="none" stroke-width="1.200"/></svg></button>
  </div>
  <div class="group group-k"><i class="grip"></i>
    <button class="tool" aria-label="Measure between"><svg viewBox="0 0 26 26"><path d="M1 6h24M6 1L1 6l5 5M20 1l5 5-5 5" stroke="#142a9a" stroke-width="1.500" fill="none"/><path d="M1 14h24v9H1z" fill="#fff" stroke="#8a2410" stroke-width="1.400"/><path d="M2 18h22v4H2z" fill="#f5a878"/><path d="M5 15v4M9 15v5M13 15v4M17 15v5M21 15v4" stroke="#1a1a50"/></svg></button>
    <button class="tool" aria-label="Measure item"><svg viewBox="0 0 26 26"><path d="M6 1h15v9l-2 8h2v6H10v-5h4V7H6z" fill="#55565e" stroke="#1a1a20" stroke-width="1.200"/><path d="M1 9v5h3" stroke="#222" stroke-width="2" fill="none"/><circle cx="8" cy="12" r="5.500" fill="#58a09c" stroke="#111"/><circle cx="7" cy="11" r="2" fill="#d8f4f0"/></svg></button>
    <button class="tool" aria-label="Measure inertia"><svg viewBox="0 0 26 26"><path d="M5 11c0-4 2-4 4-5V4l2-3h3l2 3v2c3 1 4 1 4 5v11c0 4-15 4-15 0z" fill="#907020" stroke="#1a1408" stroke-width="1.400"/><path d="M10 8c-4-9 9-9 5 0z" fill="#222"/><circle cx="12.500" cy="3.500" r="1.300" fill="#ddd"/><path d="M8 12v10" stroke="#d8b848" stroke-width="2.400"/></svg></button>
  </div>
  <div class="brand"><svg viewBox="0 0 42 32" aria-hidden="true"><path d="M12 3c4-1 9 0 8 2-1 2-5 3-7 4 5-1 8 2 6 5" fill="none" stroke="#d03038" stroke-width="1.800"/><path d="M6 15c8-1 11 1 9 5-2 3-7 5-11 5l5-8" fill="none" stroke="#26306c" stroke-width="1.800"/><path d="M27 14c-5-1-8 2-6 4 4 2 4 5-5 6" fill="none" stroke="#f0a040" stroke-width="2.400"/></svg><span>CATIA</span></div>
</div>

<footer class="status">
  <p>1 element selected</p>
  <input class="command" type="text" aria-label="Power input">
  <button class="status-btn" aria-label="Window state"><svg viewBox="0 0 14 14"><path d="M1 2h8v7H1zM12 9v2H9" fill="none" stroke="#8c8c9c" stroke-width="1.500"/></svg></button>
  <button class="status-btn" aria-label="Knowledge"><svg viewBox="0 0 14 14"><circle cx="6" cy="6" r="5" fill="none" stroke="#9c9cac"/><path d="M4 7c0-4 4-3 4 0v2H4zM11 12h2" fill="none" stroke="#8c8c9c" stroke-width="1.300"/></svg></button>
</footer>
</body>
</html>
```
FILE: styles.css
```css
* { box-sizing: border-box; }
html, body { height: 100%; margin: 0; }
body {
  display: flex;
  flex-direction: column;
  overflow: hidden;
  background: #cfcfe3;
  color: #14141c;
  font-family: "Open Sans", "Noto Sans", sans-serif;
  font-size: 12px;
  line-height: 16px;
}
button { border: 0; padding: 0; margin: 0; background: none; font: inherit; color: inherit; }
svg { display: block; flex: none; }
h1, h2, p, ul { margin: 0; padding: 0; font-size: inherit; font-weight: normal; }
.defs { position: absolute; width: 0; height: 0; }
.app-icon { width: 16px; height: 16px; }

.titlebar {
  flex: none;
  display: flex;
  align-items: flex-start;
  gap: 4px;
  height: 21px;
  padding: 3px 0 0 1px;
  border-bottom: 1px solid #000;
  background:
    radial-gradient(ellipse 14px 12px at 128px 14px, rgba(190, 40, 40, .8), transparent),
    radial-gradient(ellipse 34px 12px at 190px 16px, rgba(120, 120, 120, .6), transparent),
    radial-gradient(ellipse 26px 10px at 336px 20px, rgba(110, 110, 120, .8), transparent),
    linear-gradient(90deg, #85827f 0, #a09a98 60px, #8d8583 110px, #333 145px, #1e1e1e 260px, #121212 400px, #0c0c0c 560px, #222 740px, #161616 860px, #222 1000px, #0b0b0b 1100px, #161616 100%);
}
.title { line-height: 16px; }
.win-buttons {
  display: flex;
  margin: -3px 0 0 auto;
  height: 18px;
  border: 1px solid #b4b4b4;
  border-top: 0;
  border-radius: 0 0 0 5px;
  overflow: hidden;
}
.win {
  width: 26px;
  display: grid;
  place-items: center;
  background: linear-gradient(#8d8d8d, #4a4a4a 50%, #222 50%, #555);
  border-right: 1px solid #aaa;
}
.win svg { width: 14px; height: 12px; }
.win-close { width: 47px; border-right: 0; background: linear-gradient(#dc9c8c, #c4503c 50%, #a52410 50%, #cf5030); }

.menubar { flex: none; display: flex; align-items: center; height: 21px; padding-left: 1px; background: #cfcfe5; border-top: 1px solid #e8e8f4; }
.menu { height: 20px; padding: 0 11px; white-space: nowrap; }
.menu-hot { margin-left: 3px; padding: 0 14px 0 8px; background: #fde2b8; }
.menu-vpm { padding: 0 1px 0 7px; }
.menu u { text-underline-offset: 2px; }
.doc-buttons { display: flex; gap: 2px; margin-left: auto; }
.doc { width: 17px; height: 18px; display: grid; place-items: center; border: 1px solid #9eb0c6; background: linear-gradient(#f2f7fc, #d5e2f0); }
.doc svg { width: 12px; height: 12px; }

.toolbar { flex: none; display: flex; align-items: flex-start; }
.toolbar-top {
  height: 45px;
  padding-top: 5px;
  background: linear-gradient(#fff 0, #fbfbff 3px, #dcdcea 6px, #d0d0e4 20px, #c9c9dc 32px, #a8a8b8 41px, #9c9caa 43px);
  border-bottom: 2px solid #5a5a5e;
}
.toolbar-bottom {
  height: 48px;
  padding: 8px 0 0 8px;
  background: linear-gradient(#fff 0, #fbfbff 4px, #dcdcea 7px, #d0d0e4 22px, #c9c9dc 36px, #a8a8b8 43px, #a0a0ae 46px);
  border-bottom: 1px solid #4a4a50;
}
.group { display: flex; margin-left: 19px; }
.toolbar-bottom .group:first-child { margin-left: 0; }
.group-first { margin-left: 102px; }
.group-wide { margin-left: 11px; }
.group-near { margin-left: 10px; }
.group-k { margin-left: 13px; }
.rule { width: 2px; height: 40px; margin: -5px 0 0 3px; border-left: 1px solid #888896; border-right: 1px solid #fff; }
.rule + .group { margin-left: 4px; }
.rule-tight { margin-left: 2px; }
.grip { flex: none; width: 2px; height: 20px; margin-right: 4px; border-left: 1px solid #fff; border-right: 1px solid #9a9aa8; }
.tool { position: relative; flex: none; display: block; width: 36px; height: 36px; padding: 5px; }
.tool svg { width: 26px; height: 26px; }
.tool-narrow { width: 28px; padding: 5px 1px; }
.drop { width: 38px; }
.drop::after {
  content: "";
  position: absolute;
  right: 0;
  top: 31px;
  border: 5px solid transparent;
  border-top-color: #0c0c14;
  border-bottom: 0;
}
.lit::after { border-color: #0c0c14 #fff #fff; }
.set-select {
  appearance: none;
  width: 165px;
  height: 22px;
  margin: 7px 0 0 2px;
  padding: 0 20px 0 3px;
  border: 1px solid #85858f;
  border-radius: 3px;
  color: #14141c;
  font: inherit;
  background:
    linear-gradient(45deg, transparent 50%, #111 50%) right 9px center / 4px 4px no-repeat,
    linear-gradient(-45deg, transparent 50%, #111 50%) right 5px center / 4px 4px no-repeat,
    linear-gradient(#ececec, #d6d6d6);
}

.work { flex: 1; min-height: 0; display: flex; }
.scroll { flex: none; width: 14px; display: flex; flex-direction: column; padding: 0 0 0 2px; border-right: 1px solid #222256; background: #8c8c94; }
.scroll-track { flex: 1; background: #7878f2; }
.scroll-btn { height: 12px; font-size: 9px; line-height: 12px; font-family: "DejaVu Sans", sans-serif; background: #7878f2; color: #101040; border: 1px solid #50509c; border-width: 1px 0; }
.viewport {
  position: relative;
  flex: 1;
  min-width: 0;
  overflow: hidden;
  background: linear-gradient(#333366 0, #36366a 25%, #404074 52%, #484878 68%, #6d6d92 82%, #a9a9bf 100%);
}
.scene { position: absolute; inset: 0; width: 100%; height: 100%; }
.watermark { fill: #e6e6ff; fill-opacity: .8; }
.wm-cjk { font-family: "Noto Sans CJK SC", sans-serif; font-weight: 300; font-size: 50px; }
.wm-latin { font-family: "Liberation Mono", monospace; font-size: 44px; }
.axis { fill: #fff; font-size: 14px; }

.tree { position: relative; padding-top: 3px; color: #fff; font-family: "Noto Sans", sans-serif; font-size: 13px; list-style: none; }
.tree ul { list-style: none; padding-left: 23px; }
.tree .root > ul { padding-left: 8px; }
.tree li { position: relative; }
.tree li li::before { content: ""; position: absolute; left: 0; top: 0; bottom: 0; width: 2px; background: #fff; }
.tree li li:first-child::before { top: -8px; }
.tree li li:last-child::before { bottom: auto; height: 13px; }
.tree li li:first-child:last-child::before { height: 21px; }
.tree li li::after { content: ""; position: absolute; left: 0; top: 11px; width: 14px; height: 2px; background: #fff; }
.row { position: relative; display: flex; height: 32px; padding-left: 15px; }
.root > .row { padding-left: 1px; }
.row > svg { width: 26px; height: 26px; margin-right: 2px; z-index: 1; }
.label { align-self: center; height: 20px; padding: 0 2px; border-radius: 2px; line-height: 20px; white-space: nowrap; background: #363668; }
.picked { background: #f58410; color: #fff3c8; }
.inwork { text-decoration: underline; text-underline-offset: 2px; }
.knob {
  position: absolute;
  z-index: 2;
  left: -6px;
  top: 5px;
  width: 14px;
  height: 14px;
  border-radius: 50%;
  background: radial-gradient(circle at 50% 35%, #d4d4d4, #77777c 75%);
  color: #000;
  -webkit-text-stroke: 1px #000;
  font: bold 14px/14px "DejaVu Sans", sans-serif;
}

.panel {
  position: absolute;
  padding: 0 4px 4px;
  border: 1px solid #fff;
  outline: 1px solid #3a3a40;
  background: linear-gradient(100deg, #a5a4aa, #b4b4ba 25%, #84838f 60%, #a3a2ac);
  box-shadow: 0 2px 9px 3px rgba(0, 0, 0, .75);
}
.panel-surfaces { top: 14px; right: 126px; }
.panel-operations { top: 133px; right: 2px; }
.panel-constraints { top: 412px; right: 3px; }
.panel-head { display: flex; align-items: center; justify-content: space-between; height: 22px; padding: 0 3px 0 2px; }
.panel-close { width: 16px; height: 16px; border: 1px solid #f0c8c0; color: #fff; background: linear-gradient(#e09a88, #b8402c); font: bold 14px/12px "Liberation Sans", sans-serif; }
.panel-body {
  display: flex;
  padding: 4px 3px 4px 7px;
  border: 1px solid #fff;
  outline: 1px solid #16161c;
  background: linear-gradient(#fff 0, #e4e4f0 6px, #d2d2e4 22px, #c6c6d8 34px, #92929e 45px);
  margin-top: 1px;
}

.sidebar { flex: none; display: flex; flex-direction: column; width: 43px; padding: 3px 0 0 5px; background: linear-gradient(90deg, #fff 0, #fbfbff 3px, #d3d3e8 8px, #cfcfe5 36px, #c4c4da 43px); }
.vgroup { flex: none; }
.vgrip { display: block; width: 20px; height: 2px; margin-bottom: 5px; border-top: 1px solid #fff; border-bottom: 1px solid #9a9aa8; }
.vgroup .tool { height: 36px; }
.vgroup .drop { height: 38px; }
.vgroup .tool svg { overflow: visible; }
.vgroup-a { margin-top: 13px; }
.vgroup-b { margin-top: 11px; }
.vgroup-c { margin-top: 9px; }
.vgroup-d { margin-top: 10px; }
.vgroup-e { margin-top: 10px; }
.vgroup-f { margin-top: 16px; }
.corner-grip { width: 10px; height: 12px; margin: auto 0 4px auto; }

.brand { display: flex; flex-direction: column; align-items: flex-end; width: 48px; margin: -8px 0 0 auto; padding-right: 4px; color: #2a3060; font: italic bold 10px/10px "Liberation Sans", sans-serif; }
.brand svg { width: 42px; height: 32px; margin-bottom: -8px; }

.status { flex: none; display: flex; align-items: center; height: 19px; padding-left: 2px; background: #cfcfe5; }
.status p { flex: 1; line-height: 18px; }
.command { width: 300px; height: 17px; align-self: flex-end; border: 0; border-top: 1px solid #8a8a98; background: #fff; }
.status-btn { width: 28px; height: 17px; margin-left: 4px; display: grid; place-items: center; border: 1px solid #f6f6fc; border-right-color: #55555e; }
.status-btn svg { width: 14px; height: 14px; }
```
